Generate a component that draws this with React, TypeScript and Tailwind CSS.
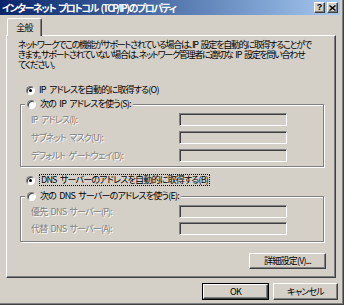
import type { ReactNode } from 'react';

const jp =
  "font-['Noto_Sans_CJK_JP','Noto_Sans_CJK_SC',sans-serif] text-[9px] tracking-[-0.8px] [word-spacing:2px] [font-feature-settings:'palt'] whitespace-nowrap";
const disabled = 'text-[#808080] [text-shadow:1px_1px_0_#fff]';
const raised =
  'bg-[#d4d0c8] border border-t-white border-l-white border-r-[#404040] border-b-[#404040] shadow-[inset_-1px_-1px_0_#808080]';
const sunken =
  'border border-t-[#808080] border-l-[#808080] border-r-white border-b-white shadow-[inset_1px_1px_0_#404040]';

function Radio({ checked = false }: { checked?: boolean }) {
  return (
    <span className="w-[9px] h-[9px] shrink-0 rounded-full bg-white border border-t-[#808080] border-l-[#808080] border-r-white border-b-white shadow-[inset_1px_1px_0_#404040] flex items-center justify-center">
      {checked && <span className="w-[3px] h-[3px] rounded-full bg-black" />}
    </span>
  );
}

function Field({ label }: { label: string }) {
  return (
    <div className="flex items-center h-[13px]">
      <span className={`${jp} ${disabled} leading-[12px] w-[148px]`}>{label}</span>
      <span className={`${sunken} w-[108px] h-[13px]`} />
    </div>
  );
}

function Group({ legend, className, rows, children }: { legend: string; className: string; rows: string; children: ReactNode }) {
  return (
    <div className={`w-[304px] border border-[#808080] shadow-[1px_1px_0_#fff,inset_1px_1px_0_#fff] ${className}`}>
      <div className="-mt-[7px] ml-[4px] w-fit h-[12px] bg-[#d4d0c8] px-[2px] flex items-center gap-[4px]">
        <Radio />
        <span className={`${jp} leading-[12px]`}>{legend}</span>
      </div>
      <div className={`pl-[10px] flex flex-col ${rows}`}>{children}</div>
    </div>
  );
}

export default function App() {
  return (
    <div className="w-[344px] h-[305px] bg-[#d4d0c8] overflow-hidden shadow-[inset_-1px_-1px_0_#404040,inset_-2px_-2px_0_#808080]">
      {/* タイトルバー */}
      <div className="w-[340px] h-[15px] bg-gradient-to-r from-[#0a246a] to-[#a6caf0] flex items-center px-[2px]">
        <span className={`${jp} text-[10px] leading-[12px] text-white font-bold tracking-[-1.5px] [word-spacing:1px]`}>
          インターネット プロトコル (TCP/IP)のプロパティ
        </span>
        <div className="ml-auto flex gap-[2px]">
          <span className={`${raised} w-[11px] h-[11px] flex items-center justify-center font-['Liberation_Sans',sans-serif] text-[9px] font-bold leading-none text-black`}>
            ?
          </span>
          <span className={`${raised} w-[11px] h-[11px] flex items-center justify-center`}>
            <svg width="7" height="6" viewBox="0 0 7 6">
              <path d="M0.5 0.5 L6.5 5.5 M6.5 0.5 L0.5 5.5" stroke="#000" strokeWidth="1.4" />
            </svg>
          </span>
        </div>
      </div>

      {/* タブ */}
      <div className="pl-[7px] pt-[3px]">
        <div className="relative z-10 -mb-[1px] w-[35px] h-[18px] bg-[#d4d0c8] border-t border-l border-r border-t-white border-l-white border-r-[#404040] rounded-t-[2px] shadow-[inset_-1px_0_0_#808080] flex items-center justify-center">
          <span className={`${jp} leading-[12px]`}>全般</span>
        </div>
      </div>

      <div className="ml-[6px] w-[330px] h-[243px] border border-t-white border-l-white border-r-[#404040] border-b-[#404040] shadow-[inset_-1px_-1px_0_#808080] pl-[13px]">
        <p className={`${jp} tracking-[-1.25px] leading-[10px] -ml-[2px] mt-[4px]`}>
          ネットワークでこの機能がサポートされている場合は、IP 設定を自動的に取得することがで
          <br />
          きます。サポートされていない場合は、ネットワーク管理者に適切な IP 設定を問い合わせ
          <br />
          てください。
        </p>

        <div className="mt-[14px] ml-[6px] h-[12px] flex items-center gap-[4px]">
          <Radio checked />
          <span className={`${jp} leading-[12px]`}>IP アドレスを自動的に取得する(O)</span>
        </div>

        <Group legend="次の IP アドレスを使う(S):" className="mt-[8px] h-[63px]" rows="mt-[3px] gap-[5px]">
          <Field label="IP アドレス(I):" />
          <Field label="サブネット マスク(U):" />
          <Field label="デフォルト ゲートウェイ(D):" />
        </Group>

        <div className="mt-[7px] ml-[6px] h-[12px] flex items-center gap-[4px]">
          <Radio checked />
          <span className={`${jp} leading-[10px] border border-dotted border-black px-[1px]`}>
            DNS サーバーのアドレスを自動的に取得する(B)
          </span>
        </div>

        <Group legend="次の DNS サーバーのアドレスを使う(E):" className="mt-[10px] h-[46px]" rows="mt-[3px] gap-[4px]">
          <Field label="優先 DNS サーバー(P):" />
          <Field label="代替 DNS サーバー(A):" />
        </Group>

        <div className="w-[306px] mt-[11px] flex justify-end">
          <button type="button" className={`${raised} w-[77px] h-[16px] flex items-center justify-center`}>
            <span className={`${jp} leading-[12px]`}>詳細設定(V)...</span>
          </button>
        </div>
      </div>

      {/* 下部ボタン */}
      <div className="w-[338px] mt-[5px] flex justify-end gap-[4px]">
        <button type="button" className="w-[67px] h-[17px] border border-black">
          <span className={`${raised} w-full h-full flex items-center justify-center`}>
            <span className={`${jp} leading-[12px]`}>OK</span>
          </span>
        </button>
        <button type="button" className={`${raised} w-[65px] h-[17px] flex items-center justify-center`}>
          <span className={`${jp} leading-[12px]`}>キャンセル</span>
        </button>
      </div>
    </div>
  );
}
